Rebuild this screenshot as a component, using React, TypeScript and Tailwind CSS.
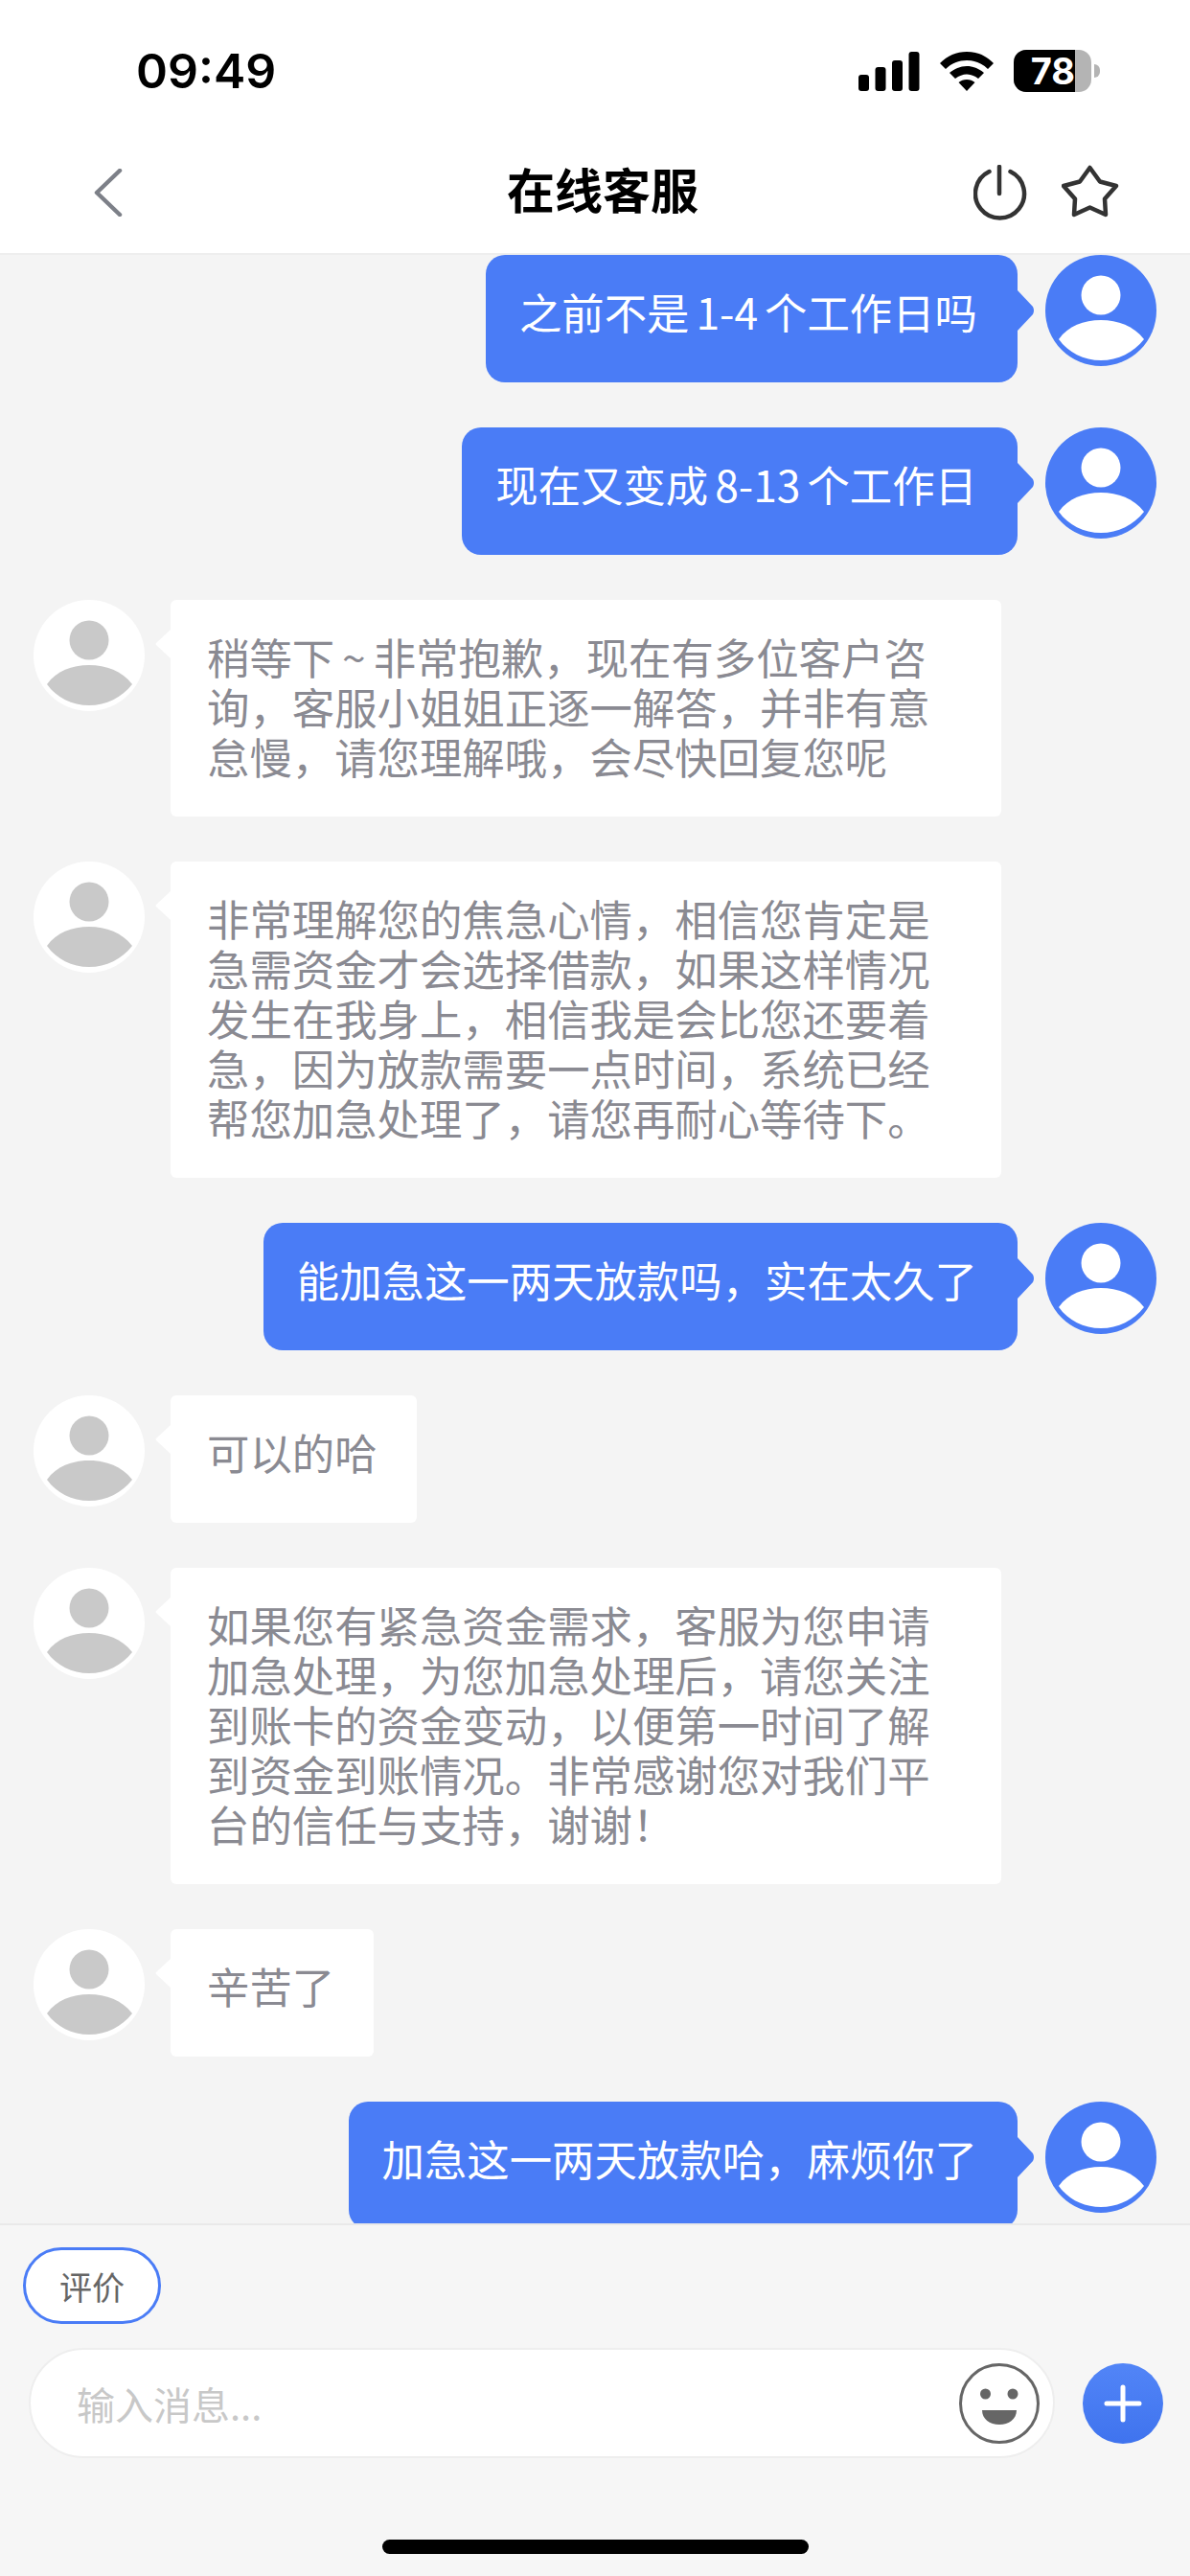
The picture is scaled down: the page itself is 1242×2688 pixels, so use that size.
const cjk = "font-['Noto_Sans_CJK_SC','Noto_Sans',sans-serif]";

type Msg = { from: "me" | "agent"; text: string };

const messages: Msg[] = [
  { from: "me", text: "之前不是 1-4 个工作日吗" },
  { from: "me", text: "现在又变成 8-13 个工作日" },
  { from: "agent", text: "稍等下 ~ 非常抱歉\uFF0C现在有多位客户咨询\uFF0C客服小姐姐正逐一解答\uFF0C并非有意怠慢\uFF0C请您理解哦\uFF0C会尽快回复您呢" },
  { from: "agent", text: "非常理解您的焦急心情\uFF0C相信您肯定是急需资金才会选择借款\uFF0C如果这样情况发生在我身上\uFF0C相信我是会比您还要着急\uFF0C因为放款需要一点时间\uFF0C系统已经帮您加急处理了\uFF0C请您再耐心等待下。" },
  { from: "me", text: "能加急这一两天放款吗\uFF0C实在太久了" },
  { from: "agent", text: "可以的哈" },
  { from: "agent", text: "如果您有紧急资金需求\uFF0C客服为您申请加急处理\uFF0C为您加急处理后\uFF0C请您关注到账卡的资金变动\uFF0C以便第一时间了解到资金到账情况。非常感谢您对我们平台的信任与支持\uFF0C谢谢\uFF01" },
  { from: "agent", text: "辛苦了" },
  { from: "me", text: "加急这一两天放款哈\uFF0C麻烦你了" },
];

const Avatar = ({ mine }: { mine: boolean }) => (
  <svg width="116" height="116" viewBox="0 0 116 116" className="shrink-0">
    <circle cx="58" cy="58" r="58" fill={mine ? "#4a7cf6" : "#ffffff"} />
    <circle cx="58" cy="42" r="20.5" fill={mine ? "#ffffff" : "#c9c9c9"} />
    <path
      d="M14 88C24 74 40 68 58 68C76 68 92 74 103 88C92 102 76 110 58 110C40 110 24 102 14 88Z"
      fill={mine ? "#ffffff" : "#c9c9c9"}
    />
  </svg>
);

const Bubble = ({ msg }: { msg: Msg }) => {
  if (msg.from === "me") {
    return (
      <div className="flex shrink-0 items-start justify-end gap-[29px] pr-[35px]">
        <div className="relative min-h-[133px] rounded-[20px] bg-[#4a7cf6] pt-[33px] pr-[42px] pb-[37px] pl-[35px] text-[44.4px] leading-[52px] [word-spacing:-3px] text-white">
          {msg.text}
          <svg width="18" height="42" viewBox="0 0 18 42" className="absolute top-[37px] left-full">
            <path d="M0 0L16 17Q18 21 16 25L0 42Z" fill="#4a7cf6" />
          </svg>
        </div>
        <Avatar mine />
      </div>
    );
  }
  return (
    <div className="flex shrink-0 items-start gap-[27px] pl-[35px]">
      <Avatar mine={false} />
      <div className="relative min-h-[133px] max-w-[867px] rounded-[6px] bg-white pt-[33px] pr-[41px] pb-[37px] pl-[38px] text-[44.4px] leading-[52px] [word-spacing:-2px] text-[#8a8a92]">
        {msg.text}
        <svg width="16" height="30" viewBox="0 0 16 30" className="absolute top-[31px] right-full">
          <path d="M16 0L1 14Q0 15 1 16L16 30Z" fill="#ffffff" />
        </svg>
      </div>
    </div>
  );
};

export default function App() {
  return (
    <div className={`flex h-[2688px] w-[1242px] flex-col overflow-hidden bg-[#f4f4f4] ${cjk}`}>
      <header className="shrink-0 border-b-2 border-[#eeeeee] bg-white">
        <div className="flex h-[131px] items-start justify-between pt-[48px] pr-[94px] pl-[142px]">
          <span className="font-['Inter',sans-serif] text-[50px] leading-[52px] font-semibold text-black">09:49</span>
          <div className="flex items-center gap-[21px] pt-[4px]">
            <svg width="64" height="41" viewBox="0 0 64 41">
              <rect x="0" y="24" width="11" height="17" rx="3" />
              <rect x="17.5" y="16" width="11" height="25" rx="3" />
              <rect x="35" y="9" width="11" height="32" rx="3" />
              <rect x="52.5" y="0" width="11" height="41" rx="3" />
            </svg>
            <svg width="56" height="41" viewBox="0 0 56 41">
              <path d="M28 0C39 0 48 4 56 12L50 18C44 12 36 9 28 9C20 9 12 12 6 18L0 12C8 4 17 0 28 0Z" />
              <path d="M28 15C35 15 41 18 46 22L40 28C36 25 32 23.500 28 23.500C24 23.500 20 25 16 28L10 22C15 18 21 15 28 15Z" />
              <path d="M28 29C31.500 29 34 30 36.500 32L28 41L19.500 32C22 30 24.500 29 28 29Z" />
            </svg>
            <div className="flex items-center gap-[3px]">
              <div className="relative h-[44px] w-[81px] overflow-hidden rounded-[13px] bg-[#b4b4b4]">
                <div className="flex h-full w-[64px] items-center justify-end bg-black font-['Inter',sans-serif] text-[38px] leading-none font-bold text-white">
                  78
                </div>
              </div>
              <div className="h-[14px] w-[6px] rounded-r-full bg-[#b4b4b4]" />
            </div>
          </div>
        </div>
        <nav className="relative flex h-[133px] items-center justify-center pb-[4px] pl-[16px]">
          <svg width="30" height="50" viewBox="0 0 30 50" fill="none" className="absolute top-[45px] left-[98px]">
            <path d="M27 2L3 25L27 48" stroke="#7d8088" strokeWidth="4.500" strokeLinecap="round" strokeLinejoin="round" />
          </svg>
          <h1 className="text-[50px] leading-[60px] font-bold text-black">在线客服</h1>
          <div className="absolute top-[41px] right-[74px] flex items-center gap-[36px]">
            <svg width="56" height="58" viewBox="0 0 56 58" fill="none" stroke="#333333" strokeWidth="4.500" strokeLinecap="round">
              <path d="M16.500 7A25.500 25.500 0 1 0 38.500 7" />
              <path d="M27 2V30" />
            </svg>
            <svg width="60" height="58" viewBox="0 0 60 58" fill="none" stroke="#333333" strokeWidth="4.500" strokeLinejoin="round">
              <path d="M29.500 3L40 17.500L57 22L45 35.500L46 52L29.500 44.500L13 52L14 35.500L2 22L19 17.500Z" />
            </svg>
          </div>
        </nav>
      </header>

      <main className="flex flex-1 flex-col gap-[47px] overflow-hidden">
        {messages.map((m) => (
          <Bubble key={m.text} msg={m} />
        ))}
      </main>

      <footer className="shrink-0 border-t-2 border-[#e9e9e9] bg-[#f6f6f6] pt-[23px]">
        <button className="ml-[24px] flex h-[80px] w-[144px] items-center justify-center rounded-[40px] border-[3px] border-[#4a7cf6] bg-white text-[34px] text-[#666666]">
          评价
        </button>
        <div className="mt-[25px] flex items-center gap-[29px] pr-[28px] pl-[30px]">
          <div className="flex h-[115px] flex-1 items-center justify-between rounded-[58px] border-2 border-[#eeeeee] bg-white pr-[14px] pl-[48px]">
            <span className="text-[40px] text-[#c8c8c8]">输入消息...</span>
            <svg width="84" height="84" viewBox="0 0 84 84">
              <circle cx="42" cy="42" r="40.500" fill="none" stroke="#666666" strokeWidth="3" />
              <circle cx="27.500" cy="32" r="5.500" fill="#666666" />
              <circle cx="56" cy="32" r="5.500" fill="#666666" />
              <path d="M24 49H60C60 58 52 64 42 64C32 64 24 58 24 49Z" fill="#666666" />
            </svg>
          </div>
          <div className="flex h-[84px] w-[84px] shrink-0 items-center justify-center rounded-full bg-gradient-to-b from-[#5285f7] to-[#3f73ee]">
            <svg width="40" height="40" viewBox="0 0 40 40" stroke="#ffffff" strokeWidth="5" strokeLinecap="round">
              <path d="M20 3V37M3 20H37" />
            </svg>
          </div>
        </div>
        <div className="flex h-[123px] items-end justify-center pb-[23px]">
          <div className="h-[15px] w-[445px] rounded-full bg-black" />
        </div>
      </footer>
    </div>
  );
}
